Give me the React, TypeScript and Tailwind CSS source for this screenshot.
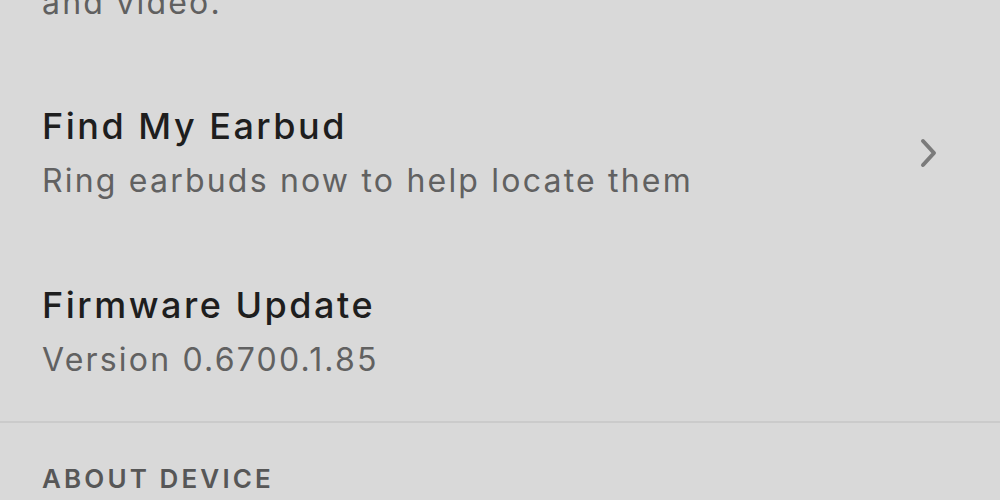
const rows = [
  { title: 'Find My Earbud', subtitle: 'Ring earbuds now to help locate them', chevron: true },
  { title: 'Firmware Update', subtitle: 'Version 0.6700.1.85', chevron: false },
]

const ChevronRight = () => (
  <svg width="22" height="34" viewBox="0 0 22 34" fill="none" className="shrink-0">
    <path d="M5 5 L16 17 L5 29" stroke="#7b7b7b" strokeWidth="4" strokeLinecap="round" strokeLinejoin="round" />
  </svg>
)

export default function App() {
  return (
    <div
      className="w-[1000px] h-[500px] overflow-hidden bg-[#d9d9d9]"
      style={{ fontFamily: 'Inter, "Noto Sans", sans-serif' }}
    >
      <div className="-mt-[17px]">
        {/* tail of the previous setting */}
        <div className="px-[42px] pb-[40px] text-[32px] leading-[40px] tracking-[2.2px] text-[#606060]">and video.</div>

        {rows.map((row) => (
          <div key={row.title} className="flex items-center justify-between pl-[42px] pr-[60px] py-[41px]">
            <div>
              <div className="text-[36px] leading-[44px] font-medium tracking-[2.5px] text-[#1e1e1e] mb-[13px]">{row.title}</div>
              <div className="text-[32px] leading-[40px] tracking-[2.2px] text-[#616161]">{row.subtitle}</div>
            </div>
            {row.chevron && <ChevronRight />}
          </div>
        ))}

        <div className="h-[2px] bg-[#cbcbcb]" />

        <div className="px-[42px] pt-[40px] text-[26px] leading-[32px] font-semibold tracking-[0.12em] text-[#575757]">
          ABOUT DEVICE
        </div>
      </div>
    </div>
  )
}
